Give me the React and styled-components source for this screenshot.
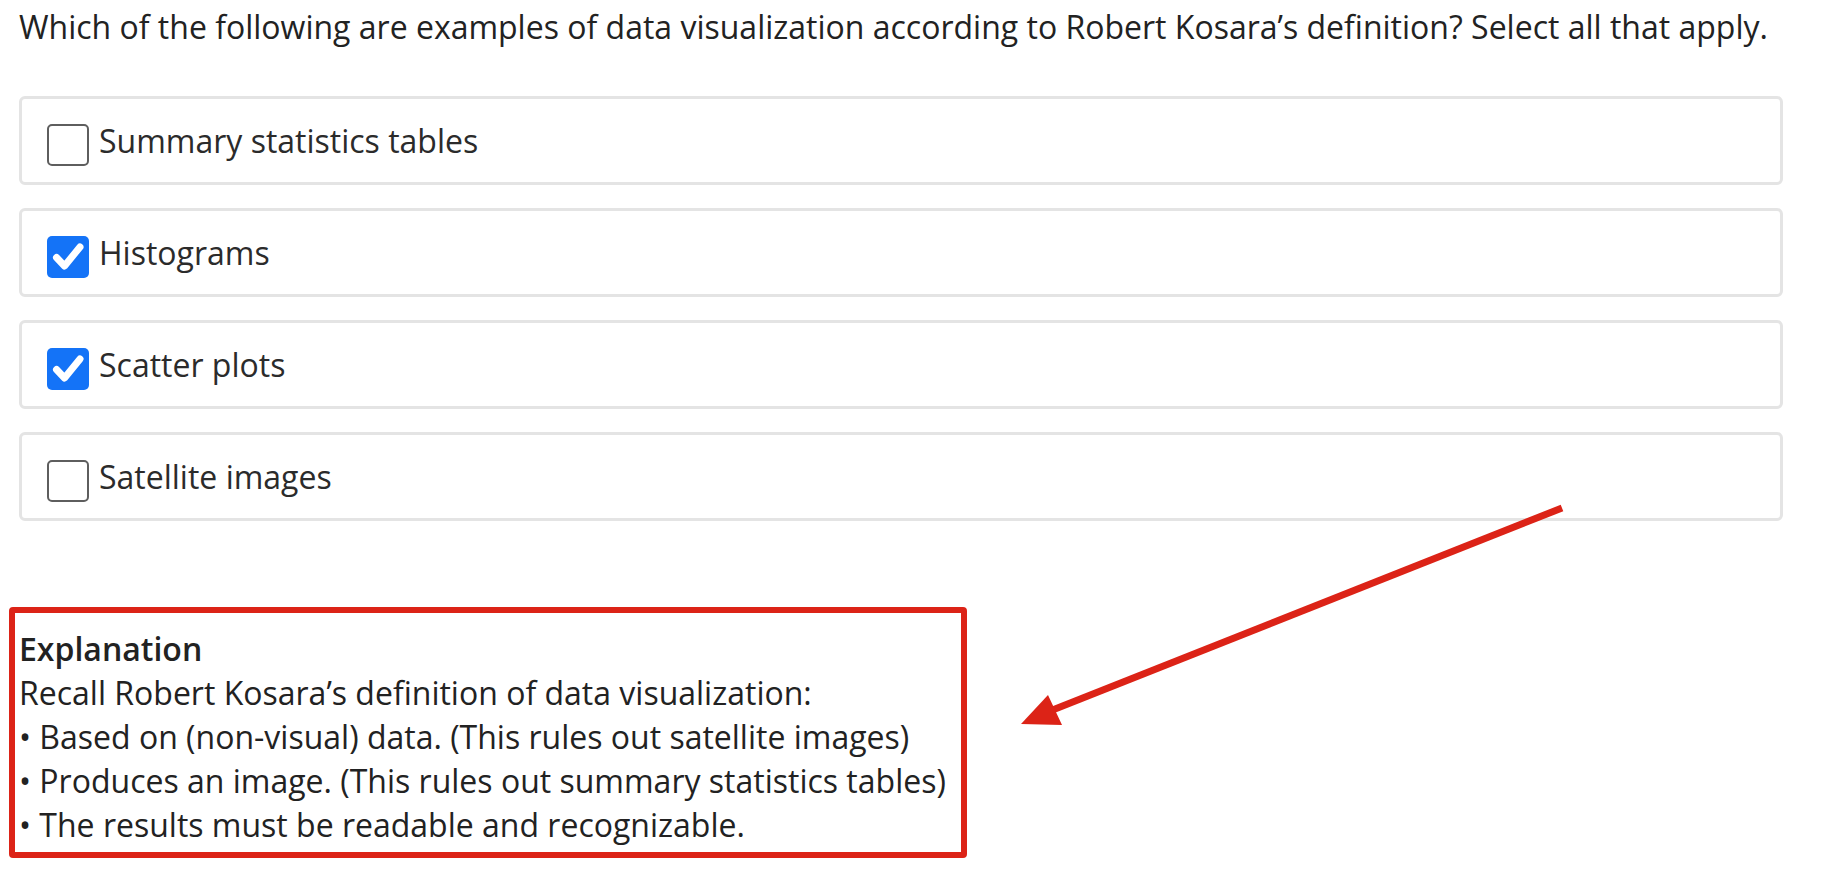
import React from 'react';
import styled, { createGlobalStyle } from 'styled-components';

const GlobalStyle = createGlobalStyle`
  html, body {
    margin: 0;
    padding: 0;
    background: #ffffff;
  }
  body {
    font-family: "Open Sans", "Noto Sans", "Liberation Sans", sans-serif;
    color: #222222;
  }
`;

const Page = styled.div`
  position: relative;
  width: 1822px;
  height: 870px;
  box-sizing: border-box;
  padding: 5px 39px 0 19px;
  overflow: hidden;
`;

const Question = styled.p`
  margin: 0;
  font-size: 32px;
  line-height: 44px;
  color: #222222;
  white-space: nowrap;
`;

const Options = styled.div`
  display: flex;
  flex-direction: column;
  gap: 23px;
  margin-top: 47px;
`;

const Option = styled.label`
  display: flex;
  align-items: center;
  height: 89px;
  box-sizing: border-box;
  padding-left: 25px;
  border: 3px solid #e4e4e4;
  border-radius: 6px;
  background: #ffffff;
`;

const Box = styled.span`
  flex: none;
  width: 42px;
  height: 42px;
  margin-top: 8px;
  box-sizing: border-box;
  border-radius: 5px;
  display: flex;
  align-items: center;
  justify-content: center;
  background: ${(p) => (p.$checked ? '#1473f7' : '#ffffff')};
  border: ${(p) => (p.$checked ? 'none' : '2px solid #5e5e5e')};
`;

const Label = styled.span`
  margin-left: 10px;
  font-size: 32px;
  line-height: 44px;
  color: #2b2b2b;
`;

const Explanation = styled.div`
  margin-top: 86px;
  margin-left: -10px;
  width: 958px;
  box-sizing: border-box;
  border: 6px solid #dc2317;
  border-radius: 4px;
  padding: 14px 0 5px 4px;
  font-size: 32px;
  line-height: 44px;
  color: #222222;
`;

const Heading = styled.div`
  font-weight: 600;
`;

const Line = styled.div`
  white-space: nowrap;
`;

const Overlay = styled.svg`
  position: absolute;
  left: 0;
  top: 0;
  pointer-events: none;
`;

function Check() {
  return (
    <svg width="42" height="42" viewBox="0 0 42 42">
      <path d="M9.5 21.5 L17.5 30 L33 11" fill="none" stroke="#ffffff" strokeWidth="7" strokeLinecap="round" strokeLinejoin="round" />
    </svg>
  );
}

const options = [
  { text: 'Summary statistics tables', checked: false },
  { text: 'Histograms', checked: true },
  { text: 'Scatter plots', checked: true },
  { text: 'Satellite images', checked: false },
];

export default function App() {
  return (
    <Page>
      <GlobalStyle />
      <Question>
        Which of the following are examples of data visualization according to Robert Kosara’s definition? Select all that apply.
      </Question>
      <Options>
        {options.map((o) => (
          <Option key={o.text}>
            <Box $checked={o.checked}>{o.checked && <Check />}</Box>
            <Label>{o.text}</Label>
          </Option>
        ))}
      </Options>
      <Explanation>
        <Heading>Explanation</Heading>
        <Line>Recall Robert Kosara’s definition of data visualization:</Line>
        <Line>• Based on (non-visual) data. (This rules out satellite images)</Line>
        <Line>• Produces an image. (This rules out summary statistics tables)</Line>
        <Line>• The results must be readable and recognizable.</Line>
      </Explanation>
      <Overlay width="1822" height="870" viewBox="0 0 1822 870">
        <line x1="1562" y1="508" x2="1050" y2="711" stroke="#dc2317" strokeWidth="7" />
        <polygon points="1021,724 1048,695 1062,725" fill="#dc2317" />
      </Overlay>
    </Page>
  );
}
